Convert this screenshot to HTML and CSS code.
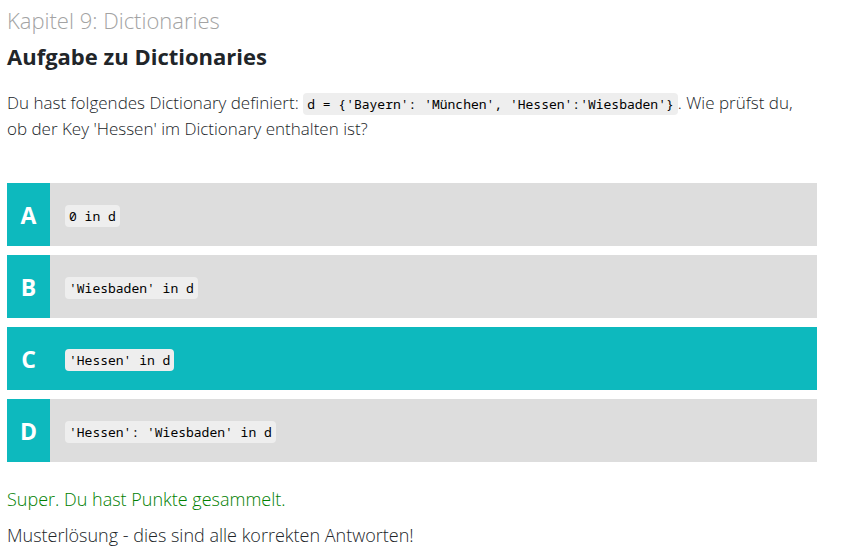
FILE: index.html
```html
<!DOCTYPE html>
<html lang="de">
<head>
<meta charset="utf-8">
<meta name="viewport" content="width=device-width, initial-scale=1">
<title>Aufgabe zu Dictionaries</title>
<link rel="stylesheet" href="styles.css">
</head>
<body>
<main class="quiz">
  <p class="chapter">Kapitel 9: Dictionaries</p>
  <h1 class="title">Aufgabe zu Dictionaries</h1>
  <p class="question">Du hast folgendes Dictionary definiert: <code>d = {'Bayern': 'München', 'Hessen':'Wiesbaden'}</code>. Wie prüfst du, ob der Key 'Hessen' im Dictionary enthalten ist?</p>
  <div class="answers">
    <button type="button" class="answer"><span class="letter">A</span><span class="option"><code>0 in d</code></span></button>
    <button type="button" class="answer"><span class="letter">B</span><span class="option"><code>'Wiesbaden' in d</code></span></button>
    <button type="button" class="answer selected" aria-pressed="true"><span class="letter">C</span><span class="option"><code>'Hessen' in d</code></span></button>
    <button type="button" class="answer"><span class="letter">D</span><span class="option"><code>'Hessen': 'Wiesbaden' in d</code></span></button>
  </div>
  <p class="feedback success">Super. Du hast Punkte gesammelt.</p>
  <p class="feedback">Musterlösung - dies sind alle korrekten Antworten!</p>
</main>
</body>
</html>
```

FILE: styles.css
```css
* {
  box-sizing: border-box;
}

body {
  margin: 0;
  background: #fff;
  color: #212529;
  font: 300 17px/26px "Open Sans", sans-serif;
}

.quiz {
  padding: 5px 37px 0 7px;
}

p,
h1 {
  margin: 0;
}

.chapter {
  color: #a3a3a3;
  font-size: 22px;
  line-height: 30px;
}

.title {
  margin-bottom: 13px;
  font-size: 22px;
  font-weight: 700;
  line-height: 42px;
}

.question {
  margin-bottom: 41px;
}

code {
  padding: 2px 4px;
  border-radius: 4px;
  background: #eee;
  color: #000;
  font: 400 13px/15px "Noto Sans Mono", "DejaVu Sans Mono", monospace;
}

.answers {
  display: grid;
  gap: 9px;
  margin-bottom: 24px;
}

.answer {
  display: flex;
  width: 100%;
  min-height: 63px;
  padding: 0;
  border: 0;
  background: #ddd;
  font: inherit;
  text-align: left;
  cursor: pointer;
}

.letter {
  display: flex;
  align-self: stretch;
  align-items: center;
  justify-content: center;
  width: 43px;
  background: #0db9be;
  color: #fff;
  font-size: 23px;
  font-weight: 700;
}

.option {
  align-self: center;
  padding: 0 15px;
}

.selected {
  background: #0db9be;
}

.feedback {
  margin-bottom: 10px;
  font-size: 18px;
}

.success {
  color: #008000;
}
```
